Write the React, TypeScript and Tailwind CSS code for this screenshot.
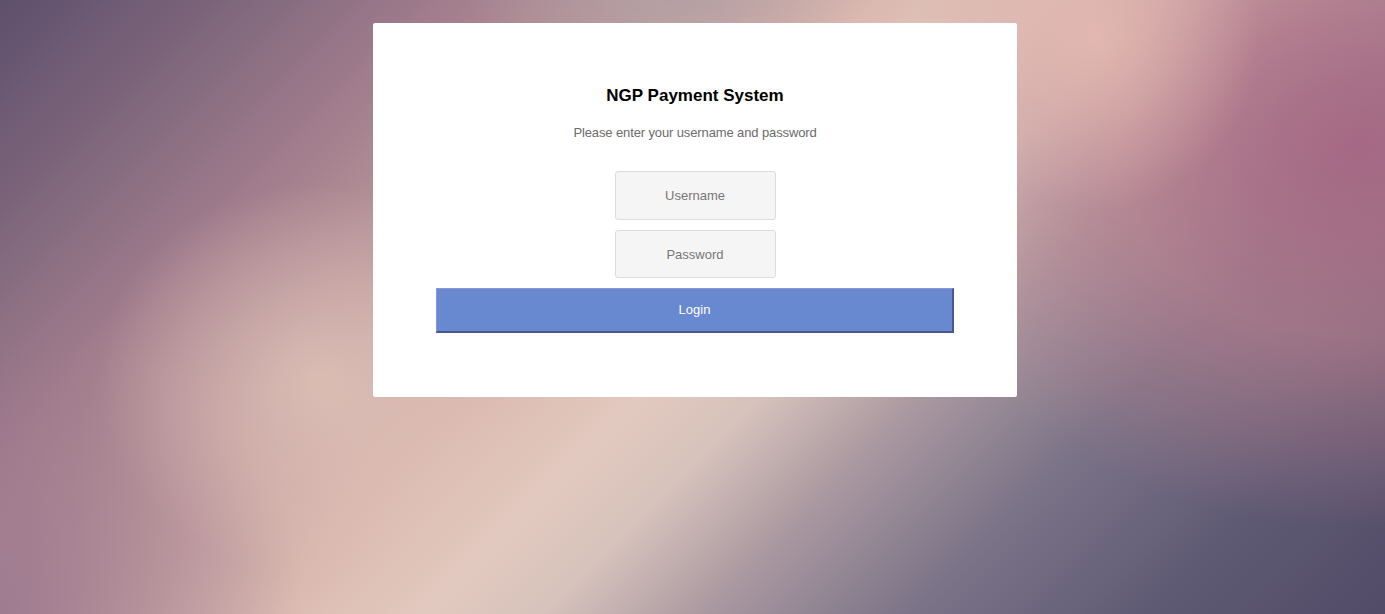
import { useState } from 'react';

export default function App() {
  const [username, setUsername] = useState('');
  const [password, setPassword] = useState('');

  return (
    <div
      className={
        'min-h-[614px] w-full font-["Liberation_Sans",Arial,sans-serif] ' +
        'bg-[radial-gradient(ellipse_14%_12%_at_48%_0%,rgba(175,162,166,0.7),rgba(175,162,166,0)_100%),radial-gradient(ellipse_16%_32%_at_23%_62%,rgba(226,198,186,0.75),rgba(226,198,186,0)_100%),radial-gradient(ellipse_12%_28%_at_79%_6%,rgba(230,188,178,0.8),rgba(230,188,178,0)_100%),radial-gradient(ellipse_34%_62%_at_98%_24%,rgba(168,104,132,0.95),rgba(190,125,140,0.6)_50%,rgba(205,150,155,0)_100%),radial-gradient(ellipse_22%_45%_at_0%_100%,rgba(150,115,140,0.75),rgba(150,115,140,0)_100%),linear-gradient(135deg,#5e4f6c_0%,#7f677c_12%,#a07c8c_22%,#c39fa0_35%,#dcbcb2_45%,#e2c9bf_52%,#d6c2bb_58%,#aa98a0_66%,#7c7488_76%,#5f5a74_88%,#514b67_100%)]'
      }
    >
      <div className="flex justify-center pt-[23px] pl-[5px]">
        {/* Login card */}
        <div className="flex w-[644px] flex-col items-center rounded-[2px] bg-white px-[63px] pt-[63px] pb-[64px]">
          <h1 className="text-[17px] leading-[20px] font-bold text-black">NGP Payment System</h1>
          <p className="mt-[19px] text-[13px] leading-[16px] tracking-[-0.12px] text-[#6b6b6b]">
            Please enter your username and password
          </p>

          <form className="mt-[30px] flex w-full flex-col items-center" onSubmit={(e) => e.preventDefault()}>
            <input
              type="text"
              value={username}
              onChange={(e) => setUsername(e.target.value)}
              placeholder="Username"
              className="h-[49px] w-[161px] rounded-[3px] border border-[#dcdcdc] bg-[#f5f5f5] text-center text-[13px] text-[#555] outline-none placeholder:text-[#777]"
            />
            <input
              type="password"
              value={password}
              onChange={(e) => setPassword(e.target.value)}
              placeholder="Password"
              className="mt-[10px] h-[48px] w-[161px] rounded-[3px] border border-[#dcdcdc] bg-[#f5f5f5] text-center text-[13px] text-[#555] outline-none placeholder:text-[#777]"
            />
            <button
              type="submit"
              className="mt-[10px] h-[45px] w-full border-t border-l border-r-2 border-b-2 border-t-[#8c95d8] border-l-[#8c95d8] border-r-[#4d5590] border-b-[#4d5590] bg-[#6888d0] text-[13px] text-white"
            >
              Login
            </button>
          </form>
        </div>
      </div>
    </div>
  );
}
